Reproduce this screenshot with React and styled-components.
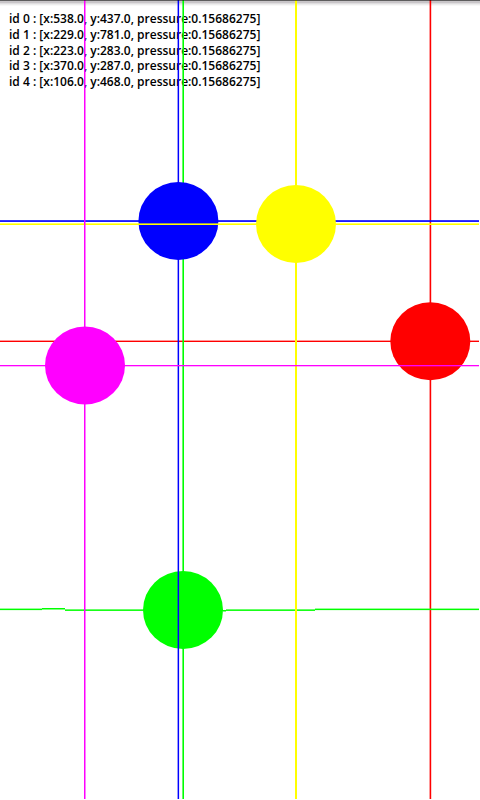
import React from "react";
import styled, { createGlobalStyle } from "styled-components";

const GlobalStyle = createGlobalStyle`
  body {
    margin: 0;
    background: #fff;
  }
`;

const Screen = styled.main`
  position: relative;
  min-height: 100vh;
  overflow: hidden;
  background: linear-gradient(
    #c8c5c8 0 3px, #dfdddf 3px 4px, #ededed 4px 5px, #f8f8f8 5px 6px, #fff 6px
  );
`;

const Readout = styled.ul`
  display: grid;
  grid-auto-rows: 1fr;
  height: 79px;
  margin: 0;
  padding: 11px 9px 0;
  list-style: none;
  font-family: "Open Sans", "Noto Sans", sans-serif;
  font-size: 12px;
  font-weight: 600;
  line-height: 15px;
  color: #000;
  white-space: nowrap;
`;

const ReadoutLine = styled.li`
  margin: 0;
`;

const TouchLayer = styled.svg`
  position: absolute;
  inset: 0;
  width: 100%;
  height: 100%;
  pointer-events: none;
`;

const readings = [
  { x: "538.0", y: "437.0" },
  { x: "229.0", y: "781.0" },
  { x: "223.0", y: "283.0" },
  { x: "370.0", y: "287.0" },
  { x: "106.0", y: "468.0" },
];

const touches = [
  { color: "#f00", cx: 430.3, cy: 341.3, v: [429.6, 1.6], h: [340.6, 1.4] },
  { color: "#0f0", cx: 183, cy: 610, v: [182.4, 1.6], h: null },
  { color: "#00f", cx: 178.4, cy: 221, v: [177.6, 1.5], h: [220.2, 1.7] },
  { color: "#ff0", cx: 296, cy: 224, v: [295, 2], h: [223.4, 1.6] },
  { color: "#f0f", cx: 85, cy: 365.5, v: [84, 1.5], h: [365, 1.3] },
];

const trail = [
  [0, 608.6, 42],
  [42, 608, 23],
  [65, 609.4, 158],
  [223, 610, 3],
  [226, 609.4, 89],
  [315, 608.6, 164],
];

function Touch({ color, cx, cy, v, h }) {
  return (
    <g fill={color}>
      <ellipse cx={cx} cy={cy} rx="40" ry="39" />
      <rect x={v[0]} y="0" width={v[1]} height="799" />
      {h
        ? <rect x="0" y={h[0]} width="479" height={h[1]} />
        : trail.map(([x, y, width]) => (
            <rect key={x} x={x} y={y} width={width} height="1.5" />
          ))}
    </g>
  );
}

export default function App() {
  return (
    <>
      <GlobalStyle />
      <Screen>
        <Readout>
          {readings.map((r, id) => (
            <ReadoutLine key={id}>
              {`id ${id} : [x:${r.x}, y:${r.y}, pressure:0.15686275]`}
            </ReadoutLine>
          ))}
        </Readout>
        <TouchLayer viewBox="0 0 480 800" preserveAspectRatio="xMidYMin meet" aria-hidden="true">
          {touches.map((t) => <Touch key={t.color} {...t} />)}
          <rect width="480" height="1" fill="#000" fillOpacity="0.53" />
        </TouchLayer>
      </Screen>
    </>
  );
}
